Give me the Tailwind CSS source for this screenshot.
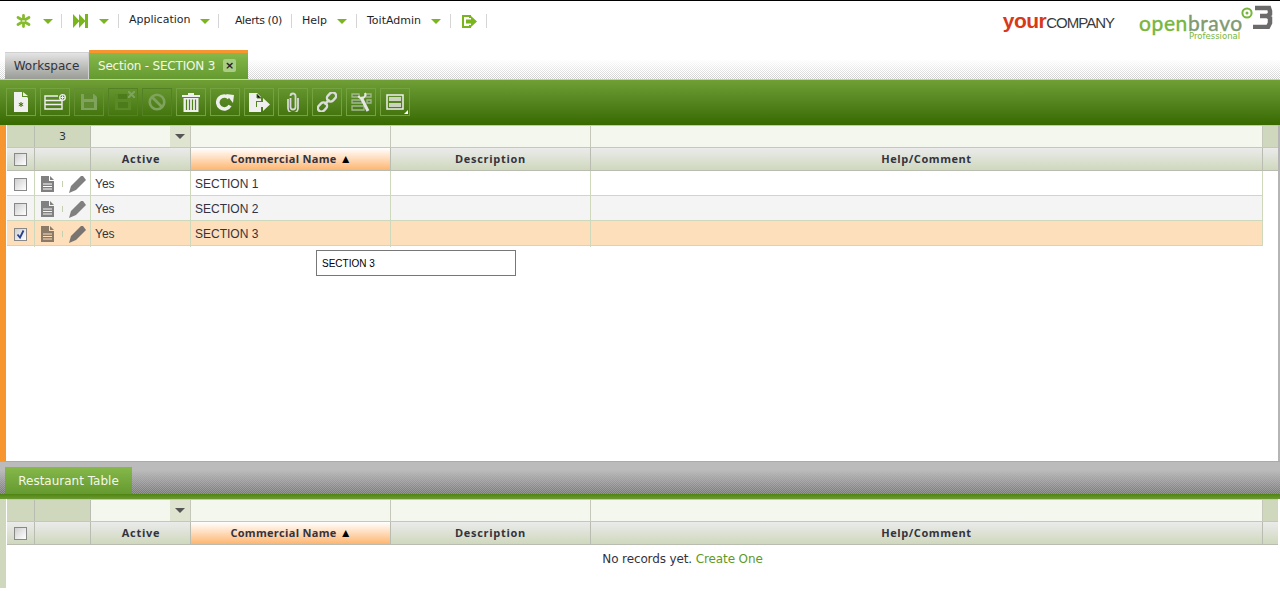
<!doctype html>
<html lang="en">
<head>
  <meta charset="utf-8">
  <title>Openbravo – Section</title>
  <script src="https://cdn.jsdelivr.net/npm/@tailwindcss/browser@4"></script>
</head>

<body class="h-[591px] w-[1280px] overflow-hidden bg-white font-['DejaVu_Sans',sans-serif] text-[11px] text-[#1f1f2b]">

  <!-- top nav -->
  <nav class="relative flex h-[49px] items-start border-t border-black pt-[11px]">
    <div class="mt-[2px] flex h-[14px] items-center">
      <svg class="ml-[16px] h-[14px] w-[15px]" viewBox="0 0 15 14"><g stroke="#86bb2b" stroke-width="2.800" stroke-linecap="round"><path d="M7.500 1.500v3.500M7.500 9v3.500M2 3.500l3.500 2M9.500 8.500l3.500 2M2 10.500l3.500-2M9.500 5.500l3.500-2"/></g></svg>
      <span class="ml-[12px] h-0 w-0 border-x-[5px] border-t-[5px] border-x-transparent border-t-[#7ab51d]"></span>
      <span class="ml-[8px] h-[14px] w-px bg-[#d5d5d5]"></span>
      <svg class="ml-[11px] h-[14px] w-[15px]" viewBox="0 0 15 14"><path fill="#7ab51d" d="M0 0l6.500 7-6.500 7zM6 0l6.500 7L6 14zM12 0h3v14h-3z"/></svg>
      <span class="ml-[11px] h-0 w-0 border-x-[5px] border-t-[5px] border-x-transparent border-t-[#7ab51d]"></span>
      <span class="ml-[9px] h-[14px] w-px bg-[#d5d5d5]"></span>
      <span class="ml-[10px] w-[60px] -translate-y-px whitespace-nowrap">Application</span>
      <span class="ml-[11px] h-0 w-0 border-x-[5px] border-t-[5px] border-x-transparent border-t-[#7ab51d]"></span>
      <span class="ml-[8px] h-[14px] w-px bg-[#d5d5d5]"></span>
      <span class="ml-[16px] w-[47px] whitespace-nowrap tracking-[-0.4px]">Alerts (0)</span>
      <span class="ml-[9px] h-[14px] w-px bg-[#d5d5d5]"></span>
      <span class="ml-[10px] w-[25px] whitespace-nowrap">Help</span>
      <span class="ml-[10px] h-0 w-0 border-x-[5px] border-t-[5px] border-x-transparent border-t-[#7ab51d]"></span>
      <span class="ml-[9px] h-[14px] w-px bg-[#d5d5d5]"></span>
      <span class="ml-[10px] w-[53px] whitespace-nowrap">ToitAdmin</span>
      <span class="ml-[11px] h-0 w-0 border-x-[5px] border-t-[5px] border-x-transparent border-t-[#7ab51d]"></span>
      <span class="ml-[9px] h-[14px] w-px bg-[#d5d5d5]"></span>
      <svg class="ml-[11px] h-[13px] w-[15px]" viewBox="0 0 15 13"><path fill="none" stroke="#7ab51d" stroke-width="2" d="M8 3V1H1v11h7v-2"/><path fill="#7ab51d" d="M4 4.500h5V1l6 5.500-6 5.500V8.500H4z"/></svg>
      <span class="ml-[9px] h-[14px] w-px bg-[#d5d5d5]"></span>
    </div>
    <!-- logos -->
    <div class="ml-auto flex items-start">
      <div class="-mt-[1px] flex items-baseline font-['Liberation_Sans',sans-serif] leading-[20px]">
        <span class="text-[21px] font-bold tracking-[-0.5px] text-[#d8391a]">your</span><span class="text-[15px] tracking-[-1px] text-[#3a3a3a]">COMPANY</span>
      </div>
      <div class="relative ml-[25px] mr-[3px] h-[30px] w-[138px] font-['Lato',sans-serif]">
        <span class="absolute left-0 top-0 whitespace-nowrap text-[21px] leading-[21px] tracking-[0.6px] text-[#78b53c] [-webkit-text-stroke:0.4px]">open<span class="text-[#7f9a70]">bravo</span></span>
        <span class="absolute left-[50px] top-[19px] whitespace-nowrap font-['DejaVu_Sans',sans-serif] text-[8.500px] leading-[10px] text-[#78b53c]">Professional</span>
        <svg class="absolute left-[101px] top-[-7px] h-[24px] w-[36px]" viewBox="0 0 36 24"><circle cx="7" cy="8" r="4.600" fill="none" stroke="#78b53c" stroke-width="2"/><circle cx="7" cy="8" r="1.500" fill="#78b53c"/><path fill="none" stroke="#6b6b6b" stroke-width="4.500" d="M15 3h14l1 3v3l-3 2h-7M27 11l3 2v5l-2 4H13"/></svg>
      </div>
    </div>
  </nav>

  <!-- tabs -->
  <div class="flex h-[30px] items-end bg-[linear-gradient(to_bottom,rgba(255,255,255,1)_35%,rgba(255,255,255,0)_100%),repeating-conic-gradient(#cfcfcf_0_25%,#ffffff_0_50%)] bg-[length:100%_100%,2px_2px] pl-[5px]">
    <div class="flex h-[27px] w-[84px] items-center justify-center border-r border-t border-[#d0d0d0] bg-gradient-to-b from-[#e4e4e4] to-[#9a9c96] text-[12px] text-[#33333f]">Workspace</div>
    <div class="flex h-[29px] w-[159px] items-center border-t-[3px] border-[#f7962e] bg-gradient-to-b from-[#86b84a] to-[#649a30] pb-px pl-[9px] text-[12px] text-[#f3f8ea]">
      <span class="w-[117px] whitespace-nowrap tracking-[-0.2px]">Section - SECTION 3</span>
      <span class="ml-[8px] flex h-[13px] w-[13px] items-center justify-center rounded-[2px] bg-[#a9cd83] text-[11px] font-bold leading-none text-[#222]">×</span>
    </div>
  </div>

  <!-- toolbar -->
  <div class="flex h-[46px] items-start gap-[4px] border-t border-[#c9c9c9] bg-gradient-to-b from-[#6f9f35] to-[#386a00] pl-[6px] pt-[8px]">
    <button class="flex h-[28px] w-[30px] items-center justify-center border border-[#74a23f]">
      <svg class="h-[20px] w-[14px]" viewBox="0 0 14 20"><path fill="#f0f0f0" d="M0 0h8v5h5v0l1 1v14H0z"/><path fill="#f0f0f0" d="M9 0l5 4H9z"/><path stroke="#3d6d08" d="M7 10v5M4.800 11.300l4.400 2.400M4.800 13.700l4.400-2.400"/></svg>
    </button>
    <button class="flex h-[28px] w-[30px] items-center justify-center border border-[#74a23f]">
      <svg class="h-[16px] w-[23px]" viewBox="0 0 23 16"><path fill="none" stroke="#f0f0f0" stroke-width="1.400" d="M14 2H1v13h17V6M1 6.500h17M1 10.500h17"/><circle cx="18.500" cy="3.500" r="2.800" fill="none" stroke="#f0f0f0" stroke-width="1.300"/><path stroke="#f0f0f0" d="M18.500 1.500v4M16.500 3.500h4"/></svg>
    </button>
    <button class="flex h-[28px] w-[30px] items-center justify-center border border-[#648f33]">
      <svg class="h-[16px] w-[16px]" viewBox="0 0 16 16"><path fill="#7fa35c" d="M0 0h13l3 3v13H0z"/><path fill="#5f8a30" d="M3 0h9v5H3zM3 8h10v6H3z"/></svg>
    </button>
    <button class="relative flex h-[28px] w-[30px] items-center justify-center border border-[#558126]">
      <svg class="h-[16px] w-[16px]" viewBox="0 0 16 16"><path fill="#598a25" d="M0 0h13l3 3v13H0z"/><path fill="#4c7b1c" d="M3 0h9v5H3zM3 8h10v6H3z"/></svg>
      <svg class="absolute right-[2px] top-[2px] h-[7px] w-[7px]" viewBox="0 0 7 7"><path stroke="#7fa35c" stroke-width="2" d="M0 0l7 7M7 0L0 7"/></svg>
    </button>
    <button class="flex h-[28px] w-[30px] items-center justify-center border border-[#558126]">
      <svg class="h-[18px] w-[18px]" viewBox="0 0 18 18"><circle cx="9" cy="9" r="7.300" fill="none" stroke="#7fa35c" stroke-width="2.600"/><path stroke="#7fa35c" stroke-width="2.600" d="M4 4l10 10"/></svg>
    </button>
    <button class="flex h-[28px] w-[30px] items-center justify-center border border-[#74a23f]">
      <svg class="h-[19px] w-[18px]" viewBox="0 0 18 19"><path fill="#efefef" d="M0 2h6V0h6v2h6v2H0zM1.500 5h15v14h-15z"/><path stroke="#4f7e1a" stroke-width="1.200" d="M4.500 6.500V17M7.500 6.500V17M10.500 6.500V17M13.500 6.500V17"/></svg>
    </button>
    <button class="flex h-[28px] w-[30px] items-center justify-center border border-[#74a23f]">
      <svg class="h-[17px] w-[18px]" viewBox="0 0 18 17"><path fill="none" stroke="#efefef" stroke-width="3.600" d="M14 11.500A6.500 6.500 0 1 1 13 4"/><path fill="#efefef" d="M10 0l8 1-1 8z"/></svg>
    </button>
    <button class="flex h-[28px] w-[30px] items-center justify-center border border-[#74a23f]">
      <svg class="h-[19px] w-[21px]" viewBox="0 0 21 19"><path fill="#efefef" d="M0 0h8l4 4v4H7v6h5v5H0z"/><path fill="#efefef" d="M8 9h6V5l7 6.500-7 6.500v-4H8z"/><path stroke="#4f7e1a" d="M8 1v4h4"/></svg>
    </button>
    <button class="flex h-[28px] w-[30px] items-center justify-center border border-[#74a23f]">
      <svg class="h-[20px] w-[12px]" viewBox="0 0 12 20"><path fill="none" stroke="#d8d8d8" stroke-width="1.800" d="M3.500 6v9a2.500 2.500 0 0 0 5 0V4a2.500 2.500 0 0 0-5 0M1 7v9a5 5 0 0 0 10 0V6"/></svg>
    </button>
    <button class="flex h-[28px] w-[30px] items-center justify-center border border-[#74a23f]">
      <svg class="h-[20px] w-[20px]" viewBox="0 0 20 20"><g fill="none" stroke="#dcdcdc" stroke-width="2.400"><path d="M7.500 12.500l5-5"/><rect x="9.500" y="1.500" width="10" height="7" rx="3.500" transform="rotate(-45 14.500 5)"/><rect x="0.500" y="11.500" width="10" height="7" rx="3.500" transform="rotate(-45 5.500 15)"/></g></svg>
    </button>
    <button class="flex h-[28px] w-[30px] items-center justify-center border border-[#74a23f]">
      <svg class="h-[20px] w-[21px]" viewBox="0 0 21 20"><path fill="none" stroke="#a3b892" stroke-width="1.300" d="M1 2h7v3H1zM1 8h10v3H1zM1 14h12v4H1zM15 2h5v3h-5zM16 8h4v3h-4z"/><path fill="none" stroke="#e6e6e6" stroke-width="3" d="M10 5l7 14"/><path fill="none" stroke="#e6e6e6" stroke-width="2.200" d="M14 1a3.500 3.500 0 0 1-6.500 3"/></svg>
    </button>
    <button class="relative flex h-[28px] w-[30px] items-center justify-center border border-[#74a23f]">
      <svg class="h-[16px] w-[18px]" viewBox="0 0 18 16"><rect x="1" y="1" width="16" height="14" fill="none" stroke="#f0f0f0" stroke-width="1.500"/><path fill="#c9d3bd" d="M3 3h12v4H3zM3 9h12v4H3z"/></svg>
      <span class="absolute bottom-[1px] right-[1px] h-0 w-0 border-b-[4px] border-l-[4px] border-b-white border-l-transparent"></span>
    </button>
  </div>

  <!-- upper grid -->
  <section class="relative flex h-[336px]">
    <div class="w-[6px] bg-[#f7962e]"></div>
    <div class="ml-px w-[1271px]">
      <div class="grid h-[23px] grid-cols-[28px_56px_100px_200px_200px_672px_15px] border-y border-[#c4c7ba] text-center text-[#333]">
        <div class="border-r border-[#b9bcb0] bg-[#cfd8bd]"></div>
        <div class="border-r border-[#b9bcb0] bg-[#cfd8bd] leading-[21px]">3</div>
        <div class="flex justify-end border-r border-[#c4c7ba] bg-[#f4f7ee]">
          <span class="flex w-[20px] items-center justify-center bg-[#dfe4d0]"><span class="h-0 w-0 border-x-[5px] border-t-[5px] border-x-transparent border-t-[#555]"></span></span>
        </div>
        <div class="border-r border-[#c4c7ba] bg-[#f4f7ee]"></div>
        <div class="border-r border-[#c4c7ba] bg-[#f4f7ee]"></div>
        <div class="border-r border-[#c4c7ba] bg-[#f4f7ee]"></div>
        <div class="bg-[#cfd8bd]"></div>
      </div>
      <div class="grid h-[23px] grid-cols-[28px_56px_100px_200px_200px_672px_15px] border-b border-[#b9bcb0] text-center font-['Open_Sans',sans-serif] font-bold leading-[22px] tracking-[0.7px] text-[#33333f]">
        <div class="flex items-center justify-center border-r border-[#b9bcb0] bg-gradient-to-b from-[#ebebeb] to-[#cfd8bd]"><span class="h-[13px] w-[13px] border border-[#888] bg-gradient-to-br from-[#cfcfcf] to-white"></span></div>
        <div class="border-r border-[#b9bcb0] bg-gradient-to-b from-[#ebebeb] to-[#cfd8bd]"></div>
        <div class="border-r border-[#b9bcb0] bg-gradient-to-b from-[#ebebeb] to-[#cfd8bd] pl-px">Active</div>
        <div class="border-r border-[#b9bcb0] bg-gradient-to-b from-white to-[#fdb56e] pl-px tracking-[0.3px]">Commercial Name <span class="text-[12px] leading-none tracking-normal text-black">▲</span></div>
        <div class="border-r border-[#b9bcb0] bg-gradient-to-b from-[#ebebeb] to-[#cfd8bd]">Description</div>
        <div class="border-r border-[#b9bcb0] bg-gradient-to-b from-[#ebebeb] to-[#cfd8bd] tracking-[0.55px]">Help/Comment</div>
        <div class="bg-gradient-to-b from-[#ebebeb] to-[#cfd8bd]"></div>
      </div>

      <div class="grid h-[25px] w-[1256px] grid-cols-[28px_56px_100px_200px_200px_671px] border-b border-r border-[#cdd8bc] font-['Liberation_Sans',sans-serif] text-[12px] leading-[26px] text-[#33333f]">
        <div class="flex items-center justify-center border-r border-[#cdd8bc]"><span class="h-[13px] w-[13px] border border-[#888] bg-gradient-to-br from-[#cfcfcf] to-white"></span></div>
        <div class="flex items-center border-r border-[#cdd8bc] pl-[6px]">
          <svg class="h-[16px] w-[13px]" viewBox="0 0 13 16"><path fill="#808080" d="M0 0h8v5h5v11H0z"/><path fill="#808080" d="M9 0l4 4H9z"/><path stroke="#fff" d="M2 8h9M2 10.500h9M2 13h9"/></svg>
          <span class="ml-[8px] h-[6px] w-px bg-[#c5d0b0]"></span>
          <svg class="ml-[6px] h-[17px] w-[17px]" viewBox="0 0 17 17"><path fill="#808080" d="M12 0h2l3 4-10 10-7 3 2-7z"/></svg>
        </div>
        <div class="border-r border-[#cdd8bc] pl-[4px]">Yes</div>
        <div class="border-r border-[#cdd8bc] pl-[4px]">SECTION 1</div>
        <div class="border-r border-[#cdd8bc]"></div>
        <div></div>
      </div>
      <div class="grid h-[25px] w-[1256px] grid-cols-[28px_56px_100px_200px_200px_671px] border-b border-r border-[#cdd8bc] bg-[#f4f4f4] font-['Liberation_Sans',sans-serif] text-[12px] leading-[26px] text-[#33333f]">
        <div class="flex items-center justify-center border-r border-[#cdd8bc]"><span class="h-[13px] w-[13px] border border-[#888] bg-gradient-to-br from-[#cfcfcf] to-white"></span></div>
        <div class="flex items-center border-r border-[#cdd8bc] pl-[6px]">
          <svg class="h-[16px] w-[13px]" viewBox="0 0 13 16"><path fill="#808080" d="M0 0h8v5h5v11H0z"/><path fill="#808080" d="M9 0l4 4H9z"/><path stroke="#f4f4f4" d="M2 8h9M2 10.500h9M2 13h9"/></svg>
          <span class="ml-[8px] h-[6px] w-px bg-[#c5d0b0]"></span>
          <svg class="ml-[6px] h-[17px] w-[17px]" viewBox="0 0 17 17"><path fill="#808080" d="M12 0h2l3 4-10 10-7 3 2-7z"/></svg>
        </div>
        <div class="border-r border-[#cdd8bc] pl-[4px]">Yes</div>
        <div class="border-r border-[#cdd8bc] pl-[4px]">SECTION 2</div>
        <div class="border-r border-[#cdd8bc]"></div>
        <div></div>
      </div>
      <div class="grid h-[25px] w-[1256px] grid-cols-[28px_56px_100px_200px_200px_671px] border-b border-r border-[#cdd8bc] bg-[#fedfbb] font-['Liberation_Sans',sans-serif] text-[12px] leading-[26px] text-[#33333f]">
        <div class="flex items-center justify-center border-r border-[#cdd8bc]">
          <span class="flex h-[13px] w-[13px] items-center justify-center border border-[#888] bg-gradient-to-br from-[#cfcfcf] to-white"><svg class="h-[11px] w-[11px]" viewBox="0 0 11 11"><path fill="none" stroke="#27408b" stroke-width="1.800" d="M2.500 5.500l2.500 3L8.500 1.500"/></svg></span>
        </div>
        <div class="flex items-center border-r border-[#cdd8bc] pl-[6px]">
          <svg class="h-[16px] w-[13px]" viewBox="0 0 13 16"><path fill="#8c7a68" d="M0 0h8v5h5v11H0z"/><path fill="#8c7a68" d="M9 0l4 4H9z"/><path stroke="#fedfbb" d="M2 8h9M2 10.500h9M2 13h9"/></svg>
          <span class="ml-[8px] h-[6px] w-px bg-[#c5d0b0]"></span>
          <svg class="ml-[6px] h-[17px] w-[17px]" viewBox="0 0 17 17"><path fill="#7a7470" d="M12 0h2l3 4-10 10-7 3 2-7z"/></svg>
        </div>
        <div class="border-r border-[#cdd8bc] pl-[4px]">Yes</div>
        <div class="border-r border-[#cdd8bc] pl-[4px]">SECTION 3</div>
        <div class="border-r border-[#cdd8bc]"></div>
        <div></div>
      </div>
    </div>
    <div class="w-[2px] bg-[#b5b5b5]"></div>
    <!-- cell hover value -->
    <div class="absolute left-[316px] top-[125px] flex h-[26px] w-[200px] items-center border border-[#777] bg-white pl-[5px] font-['Liberation_Sans',sans-serif] text-[10px] text-black">SECTION 3</div>
  </section>

  <!-- lower tab bar -->
  <div class="flex h-[33px] items-end border-t border-[#aaa] bg-[linear-gradient(to_bottom,#bbbbbb_25%,rgba(187,187,187,0)_100%),repeating-conic-gradient(#757575_0_25%,#959595_0_50%)] bg-[length:100%_100%,2px_2px] pl-[5px]">
    <div class="flex h-[27px] w-[127px] items-center justify-center bg-gradient-to-b from-[#86b84a] to-[#659a30] pt-px text-[12px] text-[#f3f8ea]">Restaurant Table</div>
  </div>
  <div class="h-[5px] bg-gradient-to-b from-[#4f8410] to-[#6d9a32]"></div>

  <!-- lower grid -->
  <section class="flex h-[92px]">
    <div class="h-[89px] w-[6px] bg-[#cfd8bd]"></div>
    <div class="ml-px w-[1271px]">
      <div class="grid h-[23px] grid-cols-[28px_56px_100px_200px_200px_672px_15px] border-y border-[#c4c7ba]">
        <div class="border-r border-[#b9bcb0] bg-[#cfd8bd]"></div>
        <div class="border-r border-[#b9bcb0] bg-[#cfd8bd]"></div>
        <div class="flex justify-end border-r border-[#c4c7ba] bg-[#f4f7ee]">
          <span class="flex w-[20px] items-center justify-center bg-[#dfe4d0]"><span class="h-0 w-0 border-x-[5px] border-t-[5px] border-x-transparent border-t-[#555]"></span></span>
        </div>
        <div class="border-r border-[#c4c7ba] bg-[#f4f7ee]"></div>
        <div class="border-r border-[#c4c7ba] bg-[#f4f7ee]"></div>
        <div class="border-r border-[#c4c7ba] bg-[#f4f7ee]"></div>
        <div class="bg-[#cfd8bd]"></div>
      </div>
      <div class="grid h-[23px] grid-cols-[28px_56px_100px_200px_200px_672px_15px] border-b border-[#b9bcb0] text-center font-['Open_Sans',sans-serif] font-bold leading-[22px] tracking-[0.7px] text-[#33333f]">
        <div class="flex items-center justify-center border-r border-[#b9bcb0] bg-gradient-to-b from-[#ebebeb] to-[#cfd8bd]"><span class="h-[13px] w-[13px] border border-[#888] bg-gradient-to-br from-[#cfcfcf] to-white"></span></div>
        <div class="border-r border-[#b9bcb0] bg-gradient-to-b from-[#ebebeb] to-[#cfd8bd]"></div>
        <div class="border-r border-[#b9bcb0] bg-gradient-to-b from-[#ebebeb] to-[#cfd8bd] pl-px">Active</div>
        <div class="border-r border-[#b9bcb0] bg-gradient-to-b from-white to-[#fdb56e] pl-px tracking-[0.3px]">Commercial Name <span class="text-[12px] leading-none tracking-normal text-black">▲</span></div>
        <div class="border-r border-[#b9bcb0] bg-gradient-to-b from-[#ebebeb] to-[#cfd8bd]">Description</div>
        <div class="border-r border-[#b9bcb0] bg-gradient-to-b from-[#ebebeb] to-[#cfd8bd] tracking-[0.55px]">Help/Comment</div>
        <div class="bg-gradient-to-b from-[#ebebeb] to-[#cfd8bd]"></div>
      </div>
      <p class="pl-[80px] pt-[7px] text-center text-[12px] leading-[15px] tracking-[-0.12px] text-[#33333f]">No records yet. <span class="text-[#5f9a1f]">Create One</span></p>
    </div>
  </section>
</body>
</html>
